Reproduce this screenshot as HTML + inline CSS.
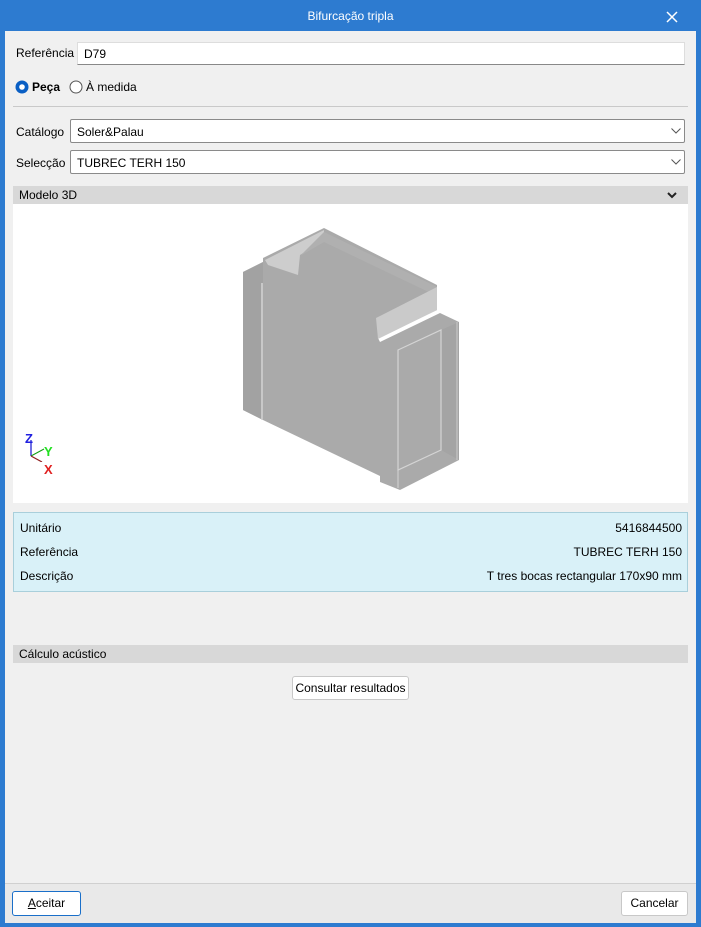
<!DOCTYPE html>
<html><head><meta charset="utf-8"><style>
*{box-sizing:border-box;margin:0;padding:0}
body{width:701px;height:927px;overflow:hidden;background:#2d7bd0;font-family:"Liberation Sans",sans-serif;font-size:12px;color:#000;position:relative}
.a{position:absolute}
#win{left:5px;top:31px;width:691px;height:892px;background:#f0f0f0}
.inp{background:#fff;border:1px solid #ddd;border-bottom:1px solid #888}
.sel{background:#fff;border:1px solid #8a8a8a;border-radius:2px}
.hdr{background:#d8d8d8;height:18px;padding-left:6px;line-height:18px}
.btn{background:#fff;border:1px solid #c8c8c8;border-radius:3px;text-align:center}
</style></head><body>
<div class="a" style="left:0;top:0;width:701px;height:31px;text-align:center;line-height:33px;color:#fff;font-size:12px">Bifurcação tripla</div>
<svg class="a" style="left:666px;top:11px" width="12" height="12"><path d="M1 1L11 11M11 1L1 11" stroke="#fff" stroke-width="1.5"/></svg>
<div id="win" class="a"></div>
<div class="a" style="left:16px;top:46px">Referência</div>
<div class="a inp" style="left:77px;top:42px;width:608px;height:23px;padding:4px 6px">D79</div>
<svg class="a" style="left:15px;top:80px" width="14" height="14"><circle cx="7" cy="7" r="6.5" fill="#0a5fc4"/><circle cx="7" cy="7" r="2.8" fill="#fff"/></svg>
<div class="a" style="left:32px;top:80px;font-weight:bold">Peça</div>
<svg class="a" style="left:69px;top:80px" width="14" height="14"><circle cx="7" cy="7" r="6" fill="#fff" stroke="#555"/></svg>
<div class="a" style="left:86px;top:80px">À medida</div>
<div class="a" style="left:13px;top:106px;width:675px;height:1px;background:#c9c9c9"></div>
<div class="a" style="left:16px;top:125px">Catálogo</div>
<div class="a sel" style="left:70px;top:119px;width:615px;height:24px;padding:5px 6px">Soler&amp;Palau</div>
<svg class="a" style="left:671px;top:128px" width="10" height="6"><path d="M0.5 0.5L5 5L9.5 0.5" stroke="#555" fill="none"/></svg>
<div class="a" style="left:16px;top:156px">Selecção</div>
<div class="a sel" style="left:70px;top:150px;width:615px;height:24px;padding:5px 6px">TUBREC TERH 150</div>
<svg class="a" style="left:671px;top:159px" width="10" height="6"><path d="M0.5 0.5L5 5L9.5 0.5" stroke="#555" fill="none"/></svg>
<div class="a hdr" style="left:13px;top:186px;width:675px">Modelo 3D</div>
<svg class="a" style="left:667px;top:192px" width="10" height="7"><path d="M1 1L5 5L9 1" stroke="#222" stroke-width="2" fill="none"/></svg>
<div class="a" style="left:13px;top:204px;width:675px;height:299px;background:#fff"></div>
<svg class="a" style="left:0;top:0" width="701" height="927">
<polygon points="243,272 263,262 263,258 324,228 437,285 437,310 378,338 380,342 440,313 459,322 459,460 400,490 380,482 380,476 263,420 243,410" fill="#aaa"/>
<polygon points="265,260 324,230 324,240 300,255 298,275 268,265" fill="#cdcdcd"/>
<polygon points="300,256 324,242 437,296 437,287 324,232" fill="#b0b0b0"/>
<polygon points="376,318 437,287 437,310 378,339" fill="#cacaca"/>
<polygon points="243,272 263,262 263,420 243,410" fill="#a2a2a2"/>
<polygon points="441,330 459,322 459,460 441,450" fill="#a4a4a4"/>
<line x1="262" y1="283" x2="262" y2="420" stroke="#d4d4d4" stroke-width="1.5"/>
<polygon points="398,350 441,330 441,450 398,470" fill="none" stroke="#d4d4d4" stroke-width="1.2"/>
<line x1="398" y1="350" x2="398" y2="488" stroke="#d4d4d4"/>
<line x1="457" y1="322" x2="457" y2="460" stroke="#ccc"/>
</svg>
<svg class="a" style="left:22px;top:432px" width="36" height="30">
<line x1="9" y1="8" x2="9" y2="24" stroke="#1010d0" stroke-width="1.2"/>
<line x1="9" y1="24" x2="22" y2="17" stroke="#10a010"/>
<line x1="9" y1="24" x2="20" y2="30" stroke="#902020" stroke-width="1.2"/>
</svg>
<div class="a" style="left:25px;top:431px;color:#2020e0;font-weight:bold;font-size:13px">Z</div>
<div class="a" style="left:44px;top:444px;color:#20e020;font-weight:bold;font-size:13px">Y</div>
<div class="a" style="left:44px;top:463px;color:#e02020;font-weight:bold;font-size:13px;line-height:14px">X</div>
<div class="a" style="left:13px;top:512px;width:675px;height:80px;background:#d9f1f8;border:1px solid #a9cfdb"></div>
<div class="a" style="left:20px;top:521px">Unitário</div><div class="a" style="right:19px;top:521px">5416844500</div>
<div class="a" style="left:20px;top:545px">Referência</div><div class="a" style="right:19px;top:545px">TUBREC TERH 150</div>
<div class="a" style="left:20px;top:569px">Descrição</div><div class="a" style="right:19px;top:569px">T tres bocas rectangular 170x90 mm</div>
<div class="a hdr" style="left:13px;top:645px;width:675px">Cálculo acústico</div>
<div class="a btn" style="left:292px;top:676px;width:117px;height:24px;line-height:22px">Consultar resultados</div>
<div class="a" style="left:5px;top:883px;width:691px;height:40px;background:#e9e9e9;border-top:1px solid #d0d0d0"></div>
<div class="a btn" style="left:12px;top:891px;width:69px;height:25px;line-height:23px;border-color:#1a6fc9"><u>A</u>ceitar</div>
<div class="a btn" style="left:621px;top:891px;width:67px;height:25px;line-height:23px">Cancelar</div>
</body></html>
